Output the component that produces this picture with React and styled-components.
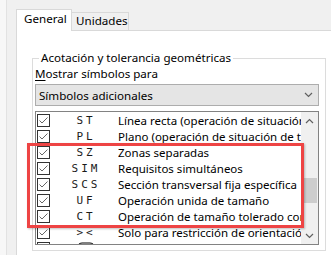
import React from "react";
import styled, { createGlobalStyle } from "styled-components";

const Global = createGlobalStyle`
  html, body { margin: 0; padding: 0; }
  body { font-family: "Noto Sans", "Open Sans", sans-serif; font-size: 11.5px; color: #000; }
`;

const Window = styled.div`
  width: 331px;
  height: 255px;
  display: flex;
  background: #f0f0f0;
  overflow: hidden;
`;

const SideStrip = styled.div`
  width: 6px;
  flex: none;
  background: #f7f7f7;
  border-right: 1px solid #e2e2e2;
`;

const Main = styled.div`
  flex: 1;
  display: flex;
  flex-direction: column;
  padding: 9px 0 0 9px;
  min-width: 0;
`;

const TabRow = styled.div`
  display: flex;
  align-items: flex-end;
  height: 22px;
  margin-bottom: -1px;
  position: relative;
  z-index: 1;
`;

const Tab = styled.div`
  box-sizing: border-box;
  width: ${(p) => (p.$active ? 56 : 57)}px;
  height: ${(p) => (p.$active ? 22 : 19)}px;
  padding-left: ${(p) => (p.$active ? 7 : 4)}px;
  background: ${(p) => (p.$active ? "#ffffff" : "#f0f0f0")};
  border: 1px solid #d9d9d9;
  border-bottom: ${(p) => (p.$active ? "none" : "1px solid #d9d9d9")};
  border-left: ${(p) => (p.$active ? "1px solid #d9d9d9" : "none")};
  line-height: ${(p) => (p.$active ? 18 : 16)}px;
  font-size: 11.6px;
  white-space: nowrap;
`;

const Panel = styled.div`
  flex: 1;
  background: #ffffff;
  border-top: 1px solid #d9d9d9;
  border-left: 1px solid #d9d9d9;
  padding-top: 19px;
  display: flex;
  flex-direction: column;
`;

const Group = styled.fieldset`
  margin: 0 0 4px 15px;
  width: 294px;
  box-sizing: border-box;
  border: 1px solid #dcdcdc;
  padding: 0 6px 5px 1px;
  min-width: 0;
`;

const Legend = styled.legend`
  margin-left: 5px;
  padding: 0 2px;
  line-height: 16px;
  font-size: 11.6px;
  white-space: nowrap;
`;

const FieldLabel = styled.div`
  height: 14px;
  line-height: 14px;
  margin: 1px 0 0 1px;
  font-size: 11.6px;
  white-space: nowrap;
  u { text-decoration-thickness: 1px; text-underline-offset: 2px; }
`;

const Combo = styled.div`
  margin: 3px 0 0 1px;
  height: 22px;
  box-sizing: border-box;
  background: #e5e5e5;
  border: 1px solid #adadad;
  display: flex;
  align-items: center;
  justify-content: space-between;
  padding: 0 5px 0 3px;
  font-size: 11.6px;
`;

const ListBox = styled.div`
  position: relative;
  margin: 5px 0 0 1px;
  height: 134px;
  box-sizing: border-box;
  border: 1px solid #828282;
  background: #ffffff;
  display: flex;
`;

const Rows = styled.div`
  flex: 1;
  overflow: hidden;
  min-width: 0;
`;

const Row = styled.div`
  display: grid;
  grid-template-columns: 14px 67px 1fr;
  align-items: center;
  height: 16px;
  padding-left: 1px;
`;

const Box = styled.span`
  width: 13px;
  height: 13px;
  box-sizing: border-box;
  border: 1px solid #333333;
  display: flex;
  align-items: center;
  justify-content: center;
  background: #fff;
`;

const Code = styled.span`
  font-family: "DejaVu Sans Mono", monospace;
  font-size: 11px;
  letter-spacing: 3px;
  padding-left: 3px;
  text-align: center;
  color: #1a1a1a;
  white-space: nowrap;
  display: flex;
  justify-content: center;
`;

const Desc = styled.span`
  white-space: nowrap;
  overflow: hidden;
  color: #000;
`;

const ScrollBar = styled.div`
  width: 17px;
  flex: none;
  background: #f0f0f0;
  display: flex;
  flex-direction: column;
`;

const Arrow = styled.div`
  height: 17px;
  display: flex;
  align-items: center;
  justify-content: center;
`;

const Track = styled.div`
  flex: 1;
  position: relative;
`;

const Thumb = styled.div`
  position: absolute;
  left: 1px;
  right: 1px;
  top: 49px;
  height: 25px;
  background: #cdcdcd;
`;

const Highlight = styled.div`
  position: absolute;
  left: -9px;
  top: 31px;
  width: 277px;
  height: 85px;
  box-sizing: border-box;
  border: 3px solid #ee4444;
  box-shadow: 1px 1px 2px rgba(0, 0, 0, 0.25);
  pointer-events: none;
`;

const Check = () => (
  <svg width="11" height="11" viewBox="0 0 11 11">
    <path d="M1.5 5.5 L4 8 L9.5 2.5" fill="none" stroke="#666666" strokeWidth="1" />
  </svg>
);

const Chevron = ({ up }) => (
  <svg width="9" height="6" viewBox="0 0 9 6">
    <path
      d={up ? "M1 5 L4.5 1.5 L8 5" : "M1 1 L4.5 4.5 L8 1"}
      fill="none"
      stroke="#606060"
      strokeWidth="1.2"
    />
  </svg>
);

const StatSymbol = () => (
  <svg width="20" height="12" viewBox="0 0 20 12">
    <rect x="1" y="1" width="18" height="10" rx="5" fill="none" stroke="#000" strokeWidth="1" />
    <path d="M5 4 H15" stroke="#000" strokeWidth="1" />
  </svg>
);

const rows = [
  ["ST", "Línea recta (operación de situación de tolerancia)"],
  ["PL", "Plano (operación de situación de tolerancia)"],
  ["SZ", "Zonas separadas"],
  ["SIM", "Requisitos simultáneos"],
  ["SCS", "Sección transversal fija específica"],
  ["UF", "Operación unida de tamaño"],
  ["CT", "Operación de tamaño tolerado común"],
  ["><", "Solo para restricción de orientación"],
  [null, "Tamaño estadístico"],
];

export default function App() {
  return (
    <>
      <Global />
      <Window>
        <SideStrip />
        <Main>
          <TabRow>
            <Tab $active>General</Tab>
            <Tab>Unidades</Tab>
          </TabRow>
          <Panel>
            <Group>
              <Legend>Acotación y tolerancia geométricas</Legend>
              <FieldLabel>
                <u>M</u>ostrar símbolos para
              </FieldLabel>
              <Combo>
                <span>Símbolos adicionales</span>
                <Chevron />
              </Combo>
              <ListBox>
                <Rows>
                  {rows.map(([code, desc], i) => (
                    <Row key={i}>
                      <Box>
                        <Check />
                      </Box>
                      <Code>{code ?? <StatSymbol />}</Code>
                      <Desc>{desc}</Desc>
                    </Row>
                  ))}
                </Rows>
                <ScrollBar>
                  <Arrow>
                    <Chevron up />
                  </Arrow>
                  <Track>
                    <Thumb />
                  </Track>
                  <Arrow>
                    <Chevron />
                  </Arrow>
                </ScrollBar>
                <Highlight />
              </ListBox>
            </Group>
          </Panel>
        </Main>
      </Window>
    </>
  );
}
